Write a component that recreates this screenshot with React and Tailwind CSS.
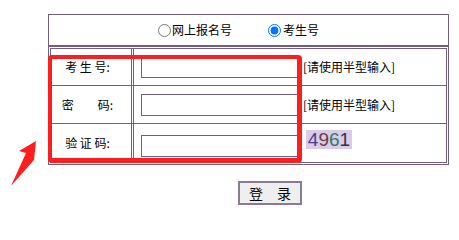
import React from "react";

const line = "border-[#745f82]";

const Row = ({ label, children, className }) => (
	<div className={`flex gap-px ${className}`}>
		<div
			className={`w-[82px] shrink-0 border-l border-r ${line} flex items-center justify-center pr-[7px] text-[12px] whitespace-pre`}
		>
			{label}
		</div>
		<div className={`flex-1 border-l border-r ${line} flex items-center`}>
			{children}
		</div>
	</div>
);

const Field = ({ className = "" }) => (
	<input
		type="text"
		className={`ml-[7px] w-[158px] h-[22px] border ${line} bg-white outline-none ${className}`}
	/>
);

const Hint = () => (
	<span className="ml-[4px] text-[12px] text-black">[请使用半型输入]</span>
);

const Captcha = () => (
	<div className="ml-[7px] mb-[8px] w-[46px] h-[19px] bg-[#dbcbea] flex items-center justify-center font-['Liberation_Sans',sans-serif] text-[19px] leading-none tracking-[0px]">
		<span className="text-[#4a3c8e]">4</span>
		<span className="text-[#6a3d3f]">9</span>
		<span className="text-[#2d7a60]">6</span>
		<span className="text-[#333344]">1</span>
	</div>
);

export default function App() {
	return (
		<div className="relative w-[459px] h-[213px] bg-white text-black font-['Noto_Sans_CJK_SC','Noto_Sans',sans-serif] overflow-hidden">
			<div className="pt-[14px] pl-[48px]">
				<div className={`w-[401px] h-[32px] border ${line} flex items-center pl-[109px] text-[12px]`}>
					<label className="flex items-center">
						<input type="radio" name="kind" className="m-0 w-[13px] h-[13px]" />
						<span className="ml-px">网上报名号</span>
					</label>
					<label className="flex items-center ml-[36px]">
						<input type="radio" name="kind" defaultChecked className="m-0 w-[13px] h-[13px]" />
						<span className="ml-[2px]">考生号</span>
					</label>
				</div>

				<div className={`w-[401px] border ${line} p-px`}>
					<Row label="考 生 号:" className={`h-[37px] border-t ${line}`}>
						<Field />
						<Hint />
					</Row>
					<Row label="密　　码:" className={`h-[38px] border-t ${line}`}>
						<Field />
						<Hint />
					</Row>
					<Row label="验 证 码:" className={`h-[40px] border-t border-b ${line}`}>
						<Field className="mt-[5px]" />
						<Captcha />
					</Row>
				</div>

				<div className="pl-[190px] pt-[16px]">
					<button className="w-[64px] h-[24px] border-2 border-[#8a7a94] bg-[#efefef] text-[14px] leading-none flex items-center justify-center">
						登　录
					</button>
				</div>
			</div>

			{/* red highlight box */}
			<div className="absolute left-[48px] top-[55px] w-[254px] h-[108px] border-l-4 border-t-4 border-r-[5px] border-b-[5px] border-[#ff1e1e] rounded-[4px] pointer-events-none" />

			{/* red arrow */}
			<svg className="absolute left-0 top-0 pointer-events-none" width="60" height="200" viewBox="0 0 60 200">
				<polygon points="36,141 19,151 26,153 11,186 34,160" fill="#ff1e1e" />
			</svg>
		</div>
	);
}
